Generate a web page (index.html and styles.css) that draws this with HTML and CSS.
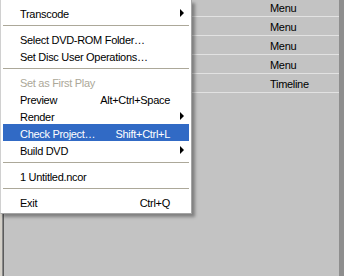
FILE: index.html
```html
<!DOCTYPE html>
<html>
<head>
<meta charset="utf-8">
<link rel="stylesheet" href="styles.css">
</head>
<body>
<div class="screen">
  <div class="edge"></div>
  <div class="panel">
    <div class="rows">
      <div class="row"><span class="cell">Menu</span></div>
      <div class="row"><span class="cell">Menu</span></div>
      <div class="row"><span class="cell">Menu</span></div>
      <div class="row"><span class="cell">Menu</span></div>
      <div class="row"><span class="cell">Timeline</span></div>
    </div>
  </div>
  <div class="strip"></div>

  <div class="menu">
    <div class="item"><span class="label">Transcode</span><span class="key"></span><span class="sub"><i class="arrow"></i></span></div>
    <div class="sep"></div>
    <div class="item"><span class="label">Select DVD-ROM Folder…</span><span class="key"></span><span class="sub"></span></div>
    <div class="item"><span class="label">Set Disc User Operations…</span><span class="key"></span><span class="sub"></span></div>
    <div class="sep"></div>
    <div class="item disabled"><span class="label">Set as First Play</span><span class="key"></span><span class="sub"></span></div>
    <div class="item"><span class="label">Preview</span><span class="key">Alt+Ctrl+Space</span><span class="sub"></span></div>
    <div class="item"><span class="label">Render</span><span class="key"></span><span class="sub"><i class="arrow"></i></span></div>
    <div class="item active"><span class="label">Check Project…</span><span class="key">Shift+Ctrl+L</span><span class="sub"></span></div>
    <div class="item"><span class="label">Build DVD</span><span class="key"></span><span class="sub"><i class="arrow"></i></span></div>
    <div class="sep"></div>
    <div class="item"><span class="label">1 Untitled.ncor</span><span class="key"></span><span class="sub"></span></div>
    <div class="sep"></div>
    <div class="item"><span class="label">Exit</span><span class="key">Ctrl+Q</span><span class="sub"></span></div>
  </div>
</div>
</body>
</html>
```
FILE: styles.css
```css
html, body {
  margin: 0;
  padding: 0;
}
body {
  font-family: "Liberation Sans", Arial, sans-serif;
  font-size: 11px;
  letter-spacing: -0.3px;
  color: #000;
  background: #c3c3c3;
}
.screen {
  position: relative;
  display: flex;
  width: 344px;
  height: 276px;
  overflow: hidden;
  background: #c3c3c3;
}
.edge {
  width: 2px;
  background: #d4d0c8;
  border-right: 1px solid #888888;
  box-shadow: 1px 0 0 #5c5c5c;
  margin-right: 1px;
}
.panel {
  flex: 1;
  background: #c3c3c3;
}
.rows {
  margin-top: -2px;
}
.row {
  height: 19px;
  box-sizing: border-box;
  padding-top: 1px;
  padding-left: 266px;
  border-bottom: 1px solid #e2e2e2;
  display: flex;
  align-items: center;
}
.strip {
  width: 5px;
  background: #8e8e8e;
}
.menu {
  position: absolute;
  left: 0;
  top: 0;
  width: 192px;
  box-sizing: border-box;
  background: #ffffff;
  border: 1px solid #a4a4a4;
  border-top: none;
  border-left-color: #d0d0d0;
  padding: 4px 2px 3px 2px;
  box-shadow: 3px 3px 3px rgba(0, 0, 0, 0.35);
}
.item {
  height: 17px;
  box-sizing: border-box;
  padding: 3px 5px 0 17px;
  display: flex;
  align-items: center;
  white-space: nowrap;
}
.label {
  flex: 1;
}
.key {
  text-align: right;
}
.sub {
  width: 14px;
  display: flex;
  justify-content: flex-end;
  align-items: center;
  margin-top: -3px;
}
.arrow {
  display: block;
  width: 0;
  height: 0;
  border-left: 4px solid #000;
  border-top: 4px solid transparent;
  border-bottom: 4px solid transparent;
}
.item.active {
  background: #316ac5;
  color: #fff;
}
.item.disabled {
  color: #aca899;
}
.sep {
  height: 9px;
  display: flex;
  align-items: center;
}
.sep::before {
  content: "";
  display: block;
  width: 100%;
  height: 1px;
  background: #aca899;
}
```
